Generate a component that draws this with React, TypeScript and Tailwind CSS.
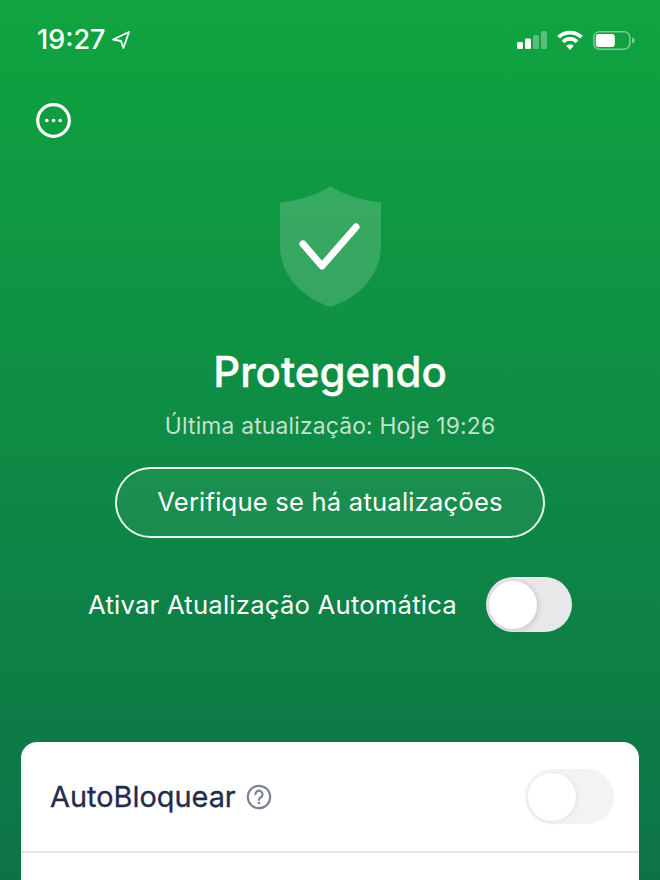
const SANS = "font-['Inter','Roboto',sans-serif]";

function Toggle({ muted }: { muted?: boolean }) {
  return (
    <div className={`flex h-[55px] items-center rounded-full ${muted ? "w-[89px] bg-[#f3f3f4]" : "w-[86px] bg-[#e8e8ea]"}`}>
      <div className={`ml-[3px] h-[48px] w-[48px] rounded-full bg-white ${muted ? "shadow-[1px_1px_5px_rgba(0,0,0,0.07)]" : "shadow-[1px_1px_6px_rgba(0,0,0,0.16)]"}`} />
    </div>
  );
}

function StatusBar() {
  return (
    <div className="flex h-[80px] items-start justify-between pl-[37px] pr-[25px] pt-[25px]">
      <div className="flex items-center gap-[6px]">
        <span className="text-[27px] font-medium leading-[30px] text-white">19:27</span>
        <svg width="20" height="20" viewBox="0 0 20 20" fill="none" stroke="white" strokeWidth="1.8" strokeLinejoin="round">
          <path d="M18 2 2 9.500l8 1.500 2.400 7z" />
        </svg>
      </div>
      <div className="flex items-center gap-[10px] pt-[5px]">
        <svg width="30" height="18" viewBox="0 0 30 18" fill="white">
          <rect x="0" y="11" width="6" height="7" rx="1.500" />
          <rect x="8" y="7.500" width="6" height="10.500" rx="1.500" />
          <rect x="16" y="4" width="6" height="14" rx="1.500" opacity="0.3" />
          <rect x="24" y="0" width="6" height="18" rx="1.500" opacity="0.3" />
        </svg>
        <svg width="26" height="20" viewBox="0 0 26 20" fill="none" stroke="white" strokeWidth="3.800">
          <path d="M1.500 7.200a16.500 16.500 0 0 1 23 0" />
          <path d="M6 11.800a10 10 0 0 1 14 0" />
          <path d="M13 20 9.200 15.800a5.200 5.200 0 0 1 7.600 0z" fill="white" stroke="none" />
        </svg>
        <svg width="42" height="19" viewBox="0 0 42 19" fill="none">
          <rect x="0.800" y="0.800" width="36" height="17.400" rx="5.500" stroke="white" strokeOpacity="0.45" strokeWidth="1.500" />
          <rect x="2.800" y="3" width="19" height="13" rx="3" fill="white" />
          <path d="M39 6.500c1.800.4 2.800 1.500 2.800 3s-1 2.600-2.800 3z" fill="white" fillOpacity="0.45" />
        </svg>
      </div>
    </div>
  );
}

export default function App() {
  return (
    <div className={`${SANS} flex h-[880px] w-[660px] flex-col overflow-hidden bg-gradient-to-b from-[#10a43f] to-[#0d7347]`}>
      <StatusBar />
      <div className="pl-[36px] pt-[23px]">
        <svg width="35" height="35" viewBox="0 0 35 35" fill="none" stroke="white" strokeWidth="3.200" className="block">
          <circle cx="17.500" cy="17.500" r="15.800" />
          <circle cx="10.800" cy="17.500" r="1.800" fill="white" stroke="none" />
          <circle cx="17.500" cy="17.500" r="1.800" fill="white" stroke="none" />
          <circle cx="24.200" cy="17.500" r="1.800" fill="white" stroke="none" />
        </svg>
      </div>
      <div className="flex flex-col items-center pt-[48px]">
        <svg width="102" height="122" viewBox="0 0 102 122" className="ml-[1px] block">
          <path d="M50.500 0C39 8 20 14.500 0 16.500v43c0 30 22 52 50.500 61.500C79 111.500 101 89.500 101 59.500v-43C81 14.500 62 8 50.500 0z" fill="white" fillOpacity="0.17" />
          <path d="M23 58 42 80 76 41" fill="none" stroke="white" strokeWidth="7" strokeLinecap="round" strokeLinejoin="round" />
        </svg>
        <h1 className="mt-[39px] text-[42px] font-medium leading-[50px] text-white [-webkit-text-stroke:0.4px_white]">Protegendo</h1>
        <p className="mt-[15px] text-[22.800px] leading-[28px] tracking-[0.2px] text-white/75">Última atualização: Hoje 19:26</p>
        <button className="mt-[27px] flex h-[71px] w-[430px] items-center justify-center rounded-full border-2 border-white/90 bg-white/5 text-[25.600px] font-normal tracking-[0.2px] text-white">
          Verifique se há atualizações
        </button>
        <div className="mt-[39px] flex items-center gap-[29px]">
          <span className="text-[25.700px] leading-[30px] tracking-[0.2px] text-white">Ativar Atualização Automática</span>
          <Toggle />
        </div>
      </div>
      <div className="mx-[21px] mt-[110px] flex-1 rounded-t-[16px] bg-white">
        <div className="flex h-[111px] items-center justify-between border-b-2 border-[#e5e5e7] pl-[29px] pr-[25px]">
          <div className="flex items-center gap-[10px]">
            <span className="text-[28.900px] font-normal leading-[36px] text-[#232c4b] [-webkit-text-stroke:0.3px_#232c4b]">AutoBloquear</span>
            <svg width="26" height="26" viewBox="0 0 26 26" fill="none" stroke="#7d8296" strokeWidth="2.200" className="mt-[1px]">
              <circle cx="13" cy="13" r="11.200" />
              <path d="M9.500 10.200a3.500 3.500 0 1 1 5.300 3c-1.200.7-1.800 1.300-1.800 2.600" strokeLinecap="round" />
              <circle cx="13" cy="19" r="1.300" fill="#7d8296" stroke="none" />
            </svg>
          </div>
          <Toggle muted />
        </div>
      </div>
    </div>
  );
}
